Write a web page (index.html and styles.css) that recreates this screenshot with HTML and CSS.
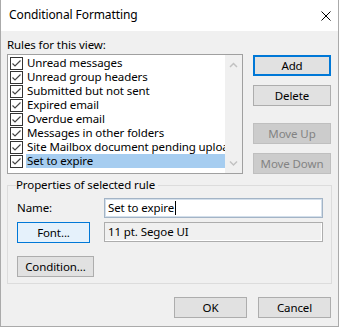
FILE: index.html
```html
<!DOCTYPE html>
<html lang="en">
<head>
  <meta charset="UTF-8">
  <meta name="viewport" content="width=device-width, initial-scale=1.0">
  <title>Conditional Formatting</title>
  <link rel="stylesheet" href="styles.css">
</head>
<body>

  <div class="dialog">
    <div class="titlebar">
      <span class="title">Conditional Formatting</span>
      <svg class="close" width="10" height="10" viewBox="0 0 10 10">
        <path d="M0.5 0.5 L9.5 9.5 M9.5 0.5 L0.5 9.5" stroke="#000" stroke-width="1" fill="none"/>
      </svg>
    </div>

    <div class="content">
      <div class="section-label">Rules for this view:</div>

      <div class="rules">
        <div class="rule-list">
          <ul class="rule-items">
            <li class="rule"><span class="check"><svg width="11" height="11" viewBox="0 0 11 11"><path d="M1.5 5.5 L4 8 L9.5 2.5" stroke="#444" stroke-width="1.2" fill="none"/></svg></span><span class="rule-name">Unread messages</span></li>
            <li class="rule"><span class="check"><svg width="11" height="11" viewBox="0 0 11 11"><path d="M1.5 5.5 L4 8 L9.5 2.5" stroke="#444" stroke-width="1.2" fill="none"/></svg></span><span class="rule-name">Unread group headers</span></li>
            <li class="rule"><span class="check"><svg width="11" height="11" viewBox="0 0 11 11"><path d="M1.5 5.5 L4 8 L9.5 2.5" stroke="#444" stroke-width="1.2" fill="none"/></svg></span><span class="rule-name">Submitted but not sent</span></li>
            <li class="rule"><span class="check"><svg width="11" height="11" viewBox="0 0 11 11"><path d="M1.5 5.5 L4 8 L9.5 2.5" stroke="#444" stroke-width="1.2" fill="none"/></svg></span><span class="rule-name">Expired email</span></li>
            <li class="rule"><span class="check"><svg width="11" height="11" viewBox="0 0 11 11"><path d="M1.5 5.5 L4 8 L9.5 2.5" stroke="#444" stroke-width="1.2" fill="none"/></svg></span><span class="rule-name">Overdue email</span></li>
            <li class="rule"><span class="check"><svg width="11" height="11" viewBox="0 0 11 11"><path d="M1.5 5.5 L4 8 L9.5 2.5" stroke="#444" stroke-width="1.2" fill="none"/></svg></span><span class="rule-name">Messages in other folders</span></li>
            <li class="rule"><span class="check"><svg width="11" height="11" viewBox="0 0 11 11"><path d="M1.5 5.5 L4 8 L9.5 2.5" stroke="#444" stroke-width="1.2" fill="none"/></svg></span><span class="rule-name">Site Mailbox document pending upload</span></li>
            <li class="rule selected"><span class="check"><svg width="11" height="11" viewBox="0 0 11 11"><path d="M1.5 5.5 L4 8 L9.5 2.5" stroke="#444" stroke-width="1.2" fill="none"/></svg></span><span class="rule-name">Set to expire</span></li>
          </ul>
          <div class="scrollbar">
            <svg width="17" height="12" viewBox="0 0 17 12"><path d="M5 8 L8.5 4.5 L12 8" stroke="#c2c2c2" stroke-width="1.5" fill="none"/></svg>
            <svg width="17" height="12" viewBox="0 0 17 12"><path d="M5 4.5 L8.5 8 L12 4.5" stroke="#c2c2c2" stroke-width="1.5" fill="none"/></svg>
          </div>
        </div>

        <div class="rule-actions">
          <button type="button" class="btn btn-default add-btn">Add</button>
          <button type="button" class="btn delete-btn">Delete</button>
          <button type="button" class="btn up-btn" disabled>Move Up</button>
          <button type="button" class="btn down-btn" disabled>Move Down</button>
        </div>
      </div>

      <fieldset class="props">
        <legend>Properties of selected rule</legend>
        <div class="prop-grid">
          <label class="prop-label">Name:</label>
          <div class="field name-field">Set to expire<span class="caret"></span></div>
          <button type="button" class="btn btn-focus font-btn">Font...</button>
          <div class="field font-field">11 pt. Segoe UI</div>
        </div>
        <button type="button" class="btn cond-btn">Condition...</button>
      </fieldset>

      <div class="footer">
        <button type="button" class="btn footer-btn">OK</button>
        <button type="button" class="btn footer-btn">Cancel</button>
      </div>
    </div>
  </div>

</body>
</html>
```

FILE: styles.css
```css
* {
  margin: 0;
  padding: 0;
  box-sizing: border-box;
}

body {
  font-family: "Noto Sans", "Liberation Sans", sans-serif;
  font-size: 11.5px;
  letter-spacing: -0.1px;
  color: #000;
  background: #f0f0f0;
}

.dialog {
  width: 339px;
  height: 327px;
  border: 1px solid #aaaaaa;
  border-top: none;
  background: #f0f0f0;
  display: flex;
  flex-direction: column;
}

.titlebar {
  height: 31px;
  background: #fff;
  display: flex;
  justify-content: space-between;
  align-items: flex-start;
  padding: 7px 7px 0 8px;
}

.title {
  font-size: 12px;
  line-height: 16px;
}

.close {
  margin-top: 4px;
}

.content {
  padding: 6px 6px 0 6px;
}

.section-label {
  line-height: 16px;
}

.rules {
  display: flex;
  gap: 10px;
  margin-top: 1px;
}

.rule-list {
  width: 236px;
  height: 120px;
  border: 1px solid #a0a0a0;
  background: #fff;
  display: flex;
}

.rule-items {
  list-style: none;
  width: 217px;
  padding: 1px 0 0 2px;
  overflow: hidden;
}

.rule {
  display: flex;
  align-items: flex-start;
  height: 14px;
  line-height: 14px;
  white-space: nowrap;
}

.check {
  width: 13px;
  height: 13px;
  margin-top: 1px;
  border: 1px solid #333;
  background: #fff;
  flex-shrink: 0;
  display: flex;
}

.rule-name {
  flex: 1;
  margin-left: 3px;
  padding-left: 1px;
  overflow: hidden;
}

.selected .rule-name {
  background: #a6cdf0;
}

.scrollbar {
  width: 17px;
  background: #f0f0f0;
  display: flex;
  flex-direction: column;
  justify-content: space-between;
  padding: 4px 0;
}

.rule-actions {
  width: 78px;
  display: flex;
  flex-direction: column;
  padding-top: 1px;
}

.btn {
  font-family: "Noto Sans", "Liberation Sans", sans-serif;
  font-size: 11.5px;
  letter-spacing: -0.1px;
  color: #000;
  height: 21px;
  background: #e1e1e1;
  border: 1px solid #adadad;
  line-height: 17px;
}

.btn:disabled {
  background: #cccccc;
  border-color: #bfbfbf;
  color: #838383;
}

.btn-default {
  border: 2px solid #0078d7;
}

.btn-focus {
  background: #e5f1fb;
  border-color: #0078d7;
}

.delete-btn {
  margin-top: 9px;
}

.up-btn {
  margin-top: 17px;
}

.down-btn {
  margin-top: 9px;
}

.props {
  width: 325px;
  margin-top: 3px;
  border: 1px solid #dcdcdc;
  padding: 0 8px 6px 9px;
}

.props legend {
  line-height: 16px;
  margin-left: -1px;
  padding: 0 3px 0 0;
}

.prop-grid {
  display: grid;
  grid-template-columns: 87px 219px;
  row-gap: 4px;
  align-items: center;
  margin-top: 5px;
}

.prop-label {
  line-height: 16px;
}

.field {
  height: 20px;
  line-height: 18px;
  padding-left: 3px;
  white-space: nowrap;
}

.name-field {
  background: #fff;
  border: 1px solid #a3b4c6;
  box-shadow: inset 0 0 0 1px #d3dfeb;
  display: flex;
  align-items: center;
}

.caret {
  width: 1px;
  height: 14px;
  background: #000;
  margin-left: 1px;
}

.font-field {
  background: #f0f0f0;
  border: 1px solid #adadad;
  box-shadow: inset -1px -1px 0 #fff;
  align-self: start;
}

.font-btn {
  width: 73px;
}

.cond-btn {
  display: block;
  width: 77px;
  margin-top: 13px;
}

.footer {
  display: flex;
  justify-content: flex-end;
  gap: 11px;
  margin-top: 13px;
  padding-right: 1px;
}

.footer-btn {
  width: 73px;
}
```
